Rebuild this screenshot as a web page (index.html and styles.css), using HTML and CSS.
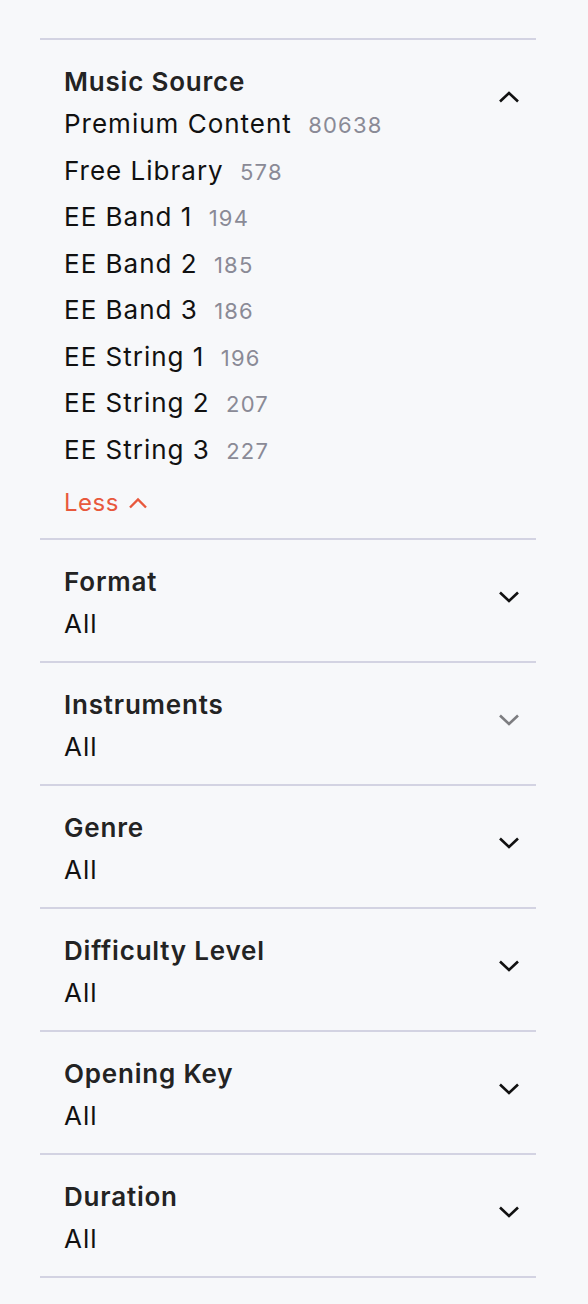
FILE: index.html
```html
<!DOCTYPE html>
<html lang="en">
<head>
  <meta charset="UTF-8">
  <title>Filters</title>
  <meta name="viewport" content="width=device-width, initial-scale=1.0">
  <link rel="stylesheet" href="styles.css">
</head>
<body>
  <div class="filtros">
    <div class="filtro abierto">
      <div class="filtro-info">
        <h3>Music Source</h3>
        <ul class="opciones">
          <li>Premium Content <span class="cuenta">80638</span></li>
          <li>Free Library <span class="cuenta">578</span></li>
          <li>EE Band 1 <span class="cuenta">194</span></li>
          <li>EE Band 2 <span class="cuenta">185</span></li>
          <li>EE Band 3 <span class="cuenta">186</span></li>
          <li>EE String 1 <span class="cuenta">196</span></li>
          <li>EE String 2 <span class="cuenta">207</span></li>
          <li>EE String 3 <span class="cuenta">227</span></li>
        </ul>
        <a class="menos" href="#">Less
          <svg width="20" height="12" viewBox="0 0 20 12"><path d="M2 10.5 10 2.5l8 8" fill="none" stroke="currentColor" stroke-width="2.4"/></svg>
        </a>
      </div>
      <svg class="flecha" width="22" height="12" viewBox="0 0 22 12"><path d="M2 10.5 11 2l9 8.5" fill="none" stroke="currentColor" stroke-width="2.6"/></svg>
    </div>

    <div class="filtro">
      <div class="filtro-info">
        <h3>Format</h3>
        <p class="valor">All</p>
      </div>
      <svg class="flecha" width="22" height="12" viewBox="0 0 22 12"><path d="M2 1.5 11 10l9-8.5" fill="none" stroke="currentColor" stroke-width="2.6"/></svg>
    </div>

    <div class="filtro">
      <div class="filtro-info">
        <h3>Instruments</h3>
        <p class="valor">All</p>
      </div>
      <svg class="flecha gris" width="22" height="12" viewBox="0 0 22 12"><path d="M2 1.5 11 10l9-8.5" fill="none" stroke="currentColor" stroke-width="2.6"/></svg>
    </div>

    <div class="filtro">
      <div class="filtro-info">
        <h3>Genre</h3>
        <p class="valor">All</p>
      </div>
      <svg class="flecha" width="22" height="12" viewBox="0 0 22 12"><path d="M2 1.5 11 10l9-8.5" fill="none" stroke="currentColor" stroke-width="2.6"/></svg>
    </div>

    <div class="filtro">
      <div class="filtro-info">
        <h3>Difficulty Level</h3>
        <p class="valor">All</p>
      </div>
      <svg class="flecha" width="22" height="12" viewBox="0 0 22 12"><path d="M2 1.5 11 10l9-8.5" fill="none" stroke="currentColor" stroke-width="2.6"/></svg>
    </div>

    <div class="filtro">
      <div class="filtro-info">
        <h3>Opening Key</h3>
        <p class="valor">All</p>
      </div>
      <svg class="flecha" width="22" height="12" viewBox="0 0 22 12"><path d="M2 1.5 11 10l9-8.5" fill="none" stroke="currentColor" stroke-width="2.6"/></svg>
    </div>

    <div class="filtro">
      <div class="filtro-info">
        <h3>Duration</h3>
        <p class="valor">All</p>
      </div>
      <svg class="flecha" width="22" height="12" viewBox="0 0 22 12"><path d="M2 1.5 11 10l9-8.5" fill="none" stroke="currentColor" stroke-width="2.6"/></svg>
    </div>
  </div>
</body>
</html>
```

FILE: styles.css
```css
* { margin: 0; padding: 0; box-sizing: border-box; font-family: 'Inter', 'Noto Sans', sans-serif; }
body {
  background: #f7f8fa;
  color: #111;
  padding: 38px 52px 40px 40px;
}
.filtros {
  border-top: 2px solid #d3d3e2;
}
.filtro {
  display: flex;
  justify-content: space-between;
  align-items: flex-start;
  border-bottom: 2px solid #d3d3e2;
  padding: 21px 16px 16px 24px;
}
.filtro.abierto {
  padding-bottom: 14px;
}
.filtro h3 {
  font-size: 26px;
  font-weight: 600;
  line-height: 42px;
  letter-spacing: 0.8px;
  color: #232323;
}
.valor {
  font-size: 26px;
  line-height: 42px;
  letter-spacing: 1px;
}
.opciones {
  list-style: none;
}
.opciones li {
  font-size: 26px;
  line-height: 42px;
  letter-spacing: 1px;
  margin-bottom: 4.5px;
}
.cuenta {
  font-size: 22px;
  line-height: 1;
  letter-spacing: 1.2px;
  color: #8a8a96;
  margin-left: 8px;
}
.menos {
  display: inline-flex;
  align-items: center;
  gap: 9px;
  margin-top: 7px;
  font-size: 24px;
  line-height: 42px;
  letter-spacing: 0.5px;
  color: #e8583c;
  text-decoration: none;
}
.flecha {
  margin-top: 30px;
  color: #111;
  flex-shrink: 0;
}
.flecha.gris {
  color: #7d7d80;
}
```
